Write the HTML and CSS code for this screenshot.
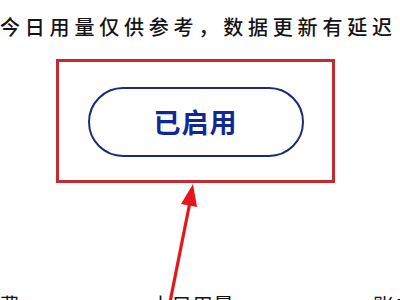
FILE: index.html
```html
<!DOCTYPE html>
<html>
<head>
    <link rel="stylesheet" href="styles.css">
</head>

<body>
    <main class="page">
        <p class="notice">今日用量仅供参考，数据更新有延迟</p>

        <div class="highlight">
            <div class="status-pill">已启用</div>
        </div>

        <div class="stats">
            <span class="stat">套餐费</span>
            <span class="stat stat-usage">本日用量</span>
            <span class="stat stat-balance">账户余额</span>
        </div>

        <!-- annotation arrow drawn over the page -->
        <svg class="arrow" viewBox="0 0 400 300" width="400" height="300">
            <line x1="170" y1="302" x2="190" y2="202" stroke="#e5161c" stroke-width="3.2"/>
            <polygon points="193,184 181,204 197,207" fill="#e5161c"/>
        </svg>
    </main>
</body>

</html>
```

FILE: styles.css
```css
/* General */
body, html {
    margin: 0;
    padding: 0;
    background: #fff;
}
.page {
    position: relative;
    width: 400px;
    height: 300px;
    overflow: hidden;
    font-family: "Noto Sans CJK SC", "Noto Sans", sans-serif;
    color: #141414;
}

/* Caption */
.notice {
    margin: 0;
    padding-top: 17px;
    font-size: 20px;
    font-weight: 500;
    line-height: 20px;
    letter-spacing: 4.8px;
    white-space: nowrap;
}

/* Red frame with status button */
.highlight {
    display: flex;
    align-items: center;
    justify-content: center;
    box-sizing: border-box;
    width: 279px;
    height: 124px;
    margin: 22px 0 0 56px;
    border: 3px solid #c42a2f;
}
.status-pill {
    display: flex;
    align-items: center;
    justify-content: center;
    box-sizing: border-box;
    width: 216px;
    height: 70px;
    margin-top: 1px;
    border: 2px solid #1c2a7a;
    border-radius: 35px;
    color: #102896;
    font-size: 27px;
    font-weight: 700;
    letter-spacing: 1px;
}

/* Bottom row, mostly cut off */
.stats {
    display: flex;
    margin: 109px 0 0 -43px;
    font-size: 21px;
    line-height: 24px;
    white-space: nowrap;
}
.stat { flex-shrink: 0; }
.stat-usage { margin-left: 130px; }
.stat-balance { margin-left: 139px; }

/* Overlay */
.arrow {
    position: absolute;
    top: 0;
    left: 0;
    pointer-events: none;
}
```
